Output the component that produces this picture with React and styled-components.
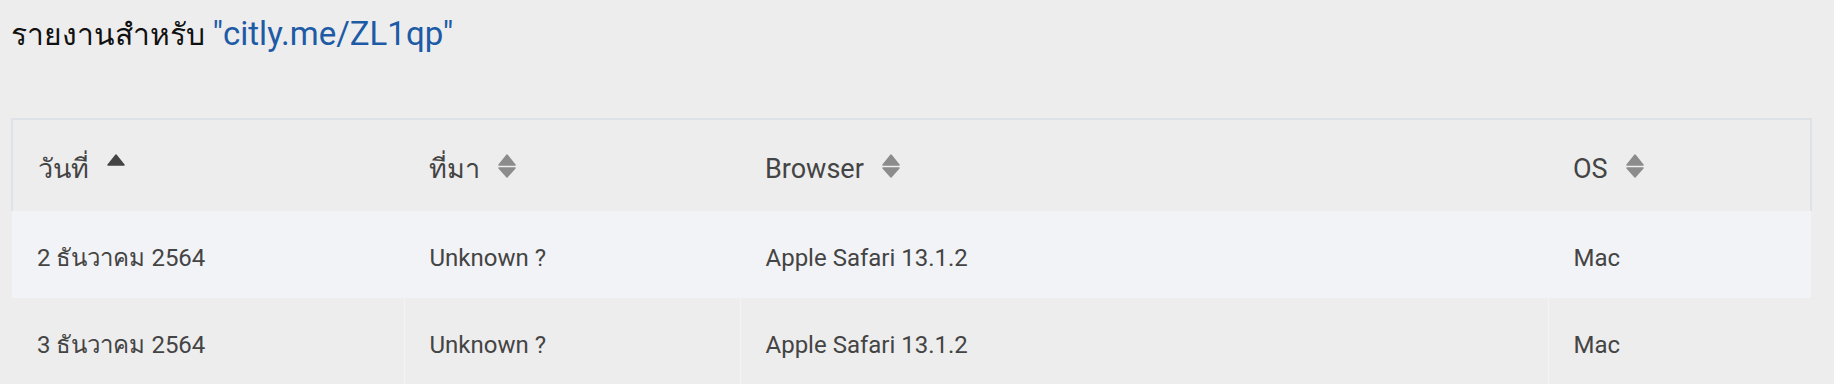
import React from "react";
import styled, { createGlobalStyle } from "styled-components";

const Global = createGlobalStyle`
  html, body { margin: 0; padding: 0; background: #ededed; }
  body { font-family: Roboto, "Noto Sans", "DejaVu Sans", sans-serif; }
`;

const Page = styled.div`
  padding: 16px 24px 0 11px;
`;

const Title = styled.h1`
  margin: 0;
  font-size: 30px;
  line-height: 36px;
  font-weight: 400;
  color: #111;
`;

const Link = styled.span`
  color: #1d5ba6;
  font-size: 33px;
`;

const Table = styled.table`
  margin-top: 65px;
  width: 1799px;
  table-layout: fixed;
  border-collapse: collapse;
  border-spacing: 0;
`;

const HeadCell = styled.th`
  height: 85px;
  padding: 6px 24px 0 25px;
  text-align: left;
  font-size: 27px;
  line-height: 30px;
  font-weight: 400;
  color: #444;
  background: #ededed;
  border-top: 2px solid #dde2e7;
  &:first-child { border-left: 2px solid #dde2e7; }
  &:last-child { border-right: 2px solid #dde2e7; }
  white-space: nowrap;
`;

const Row = styled.tr`
  background: ${(p) => (p.$odd ? "#f2f3f6" : "#ededed")};
`;

const Cell = styled.td`
  height: 87px;
  padding: 6px 24px 0 25px;
  box-sizing: border-box;
  font-size: 24px;
  line-height: 28px;
  color: #444;
  white-space: nowrap;
  & + & { border-left: 1px solid ${(p) => (p.$odd ? "#eceef1" : "#f3f3f3")}; }
`;

const Icon = styled.svg`
  width: 18px;
  height: 24px;
  margin-left: 18px;
  vertical-align: baseline;
`;

function SortIcon({ active }) {
  return (
    <Icon viewBox="0 0 18 24">
      <path d="M1 11 L9 1 L17 11 Z" fill={active ? "#444" : "#8c8c8c"} stroke={active ? "#444" : "#8c8c8c"} strokeWidth="1.5" strokeLinejoin="round" />
      {!active && (
        <path d="M1 14 L9 23 L17 14 Z" fill="#8c8c8c" stroke="#8c8c8c" strokeWidth="1.5" strokeLinejoin="round" />
      )}
    </Icon>
  );
}

const columns = [
  { label: "วันที่", width: 392, active: true },
  { label: "ที่มา", width: 336 },
  { label: "Browser", width: 808 },
  { label: "OS", width: 263 },
];

const rows = [
  ["2 ธันวาคม 2564", "Unknown ?", "Apple Safari 13.1.2", "Mac"],
  ["3 ธันวาคม 2564", "Unknown ?", "Apple Safari 13.1.2", "Mac"],
];

export default function App() {
  return (
    <Page>
      <Global />
      <Title>
        รายงานสำหรับ <Link>"citly.me/ZL1qp"</Link>
      </Title>
      <Table>
        <colgroup>
          {columns.map((c) => (
            <col key={c.label} style={{ width: c.width }} />
          ))}
        </colgroup>
        <thead>
          <tr>
            {columns.map((c) => (
              <HeadCell key={c.label}>
                {c.label}
                <SortIcon active={c.active} />
              </HeadCell>
            ))}
          </tr>
        </thead>
        <tbody>
          {rows.map((r, i) => (
            <Row key={i} $odd={i % 2 === 0}>
              {r.map((v, j) => (
                <Cell key={j} $odd={i % 2 === 0}>
                  {v}
                </Cell>
              ))}
            </Row>
          ))}
        </tbody>
      </Table>
    </Page>
  );
}
